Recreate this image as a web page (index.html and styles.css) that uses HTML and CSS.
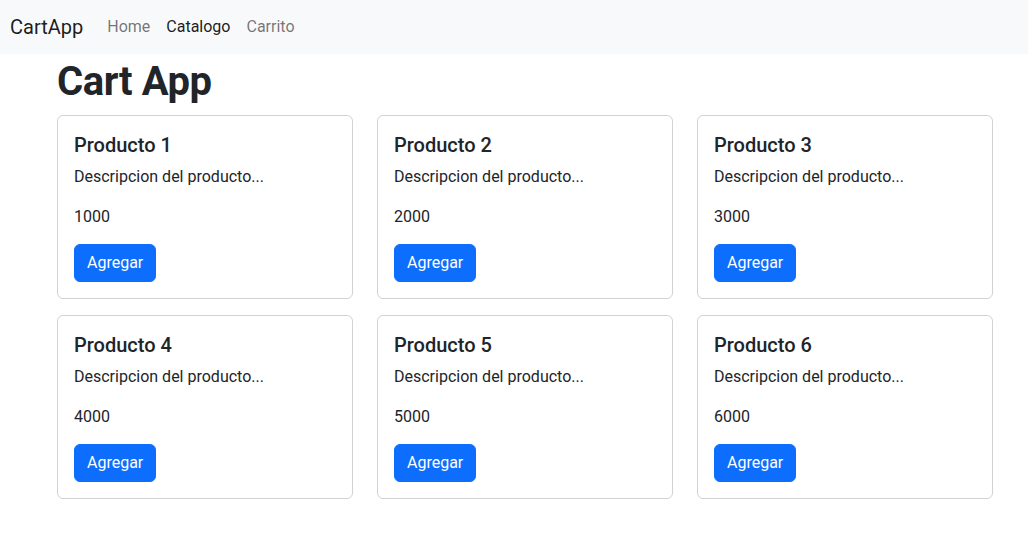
FILE: index.html
```html
<!DOCTYPE html>
<html lang="es">
<head>
<meta charset="utf-8">
<title>CartApp</title>
<link rel="stylesheet" href="styles.css">
</head>
<body>
<nav class="navbar">
  <span class="brand">CartApp</span>
  <ul class="nav">
    <li><a class="nav-link">Home</a></li>
    <li><a class="nav-link active">Catalogo</a></li>
    <li><a class="nav-link">Carrito</a></li>
  </ul>
</nav>
<main class="container">
  <h1 class="title">Cart App</h1>
  <div class="grid">
    <div class="card"><h5 class="card-title">Producto 1</h5><p class="card-text">Descripcion del producto...</p><p class="price">1000</p><button class="btn">Agregar</button></div>
    <div class="card"><h5 class="card-title">Producto 2</h5><p class="card-text">Descripcion del producto...</p><p class="price">2000</p><button class="btn">Agregar</button></div>
    <div class="card"><h5 class="card-title">Producto 3</h5><p class="card-text">Descripcion del producto...</p><p class="price">3000</p><button class="btn">Agregar</button></div>
    <div class="card"><h5 class="card-title">Producto 4</h5><p class="card-text">Descripcion del producto...</p><p class="price">4000</p><button class="btn">Agregar</button></div>
    <div class="card"><h5 class="card-title">Producto 5</h5><p class="card-text">Descripcion del producto...</p><p class="price">5000</p><button class="btn">Agregar</button></div>
    <div class="card"><h5 class="card-title">Producto 6</h5><p class="card-text">Descripcion del producto...</p><p class="price">6000</p><button class="btn">Agregar</button></div>
  </div>
</main>
</body>
</html>
```
FILE: styles.css
```css
* { box-sizing: border-box; }
body {
  margin: 0;
  font-family: Roboto, "Noto Sans", sans-serif;
  font-size: 16px;
  line-height: 1.5;
  color: #212529;
  background: #fff;
}
.navbar {
  display: flex;
  align-items: center;
  height: 54px;
  padding: 0 10px;
  background: #f8f9fa;
}
.brand {
  font-size: 20px;
  color: rgba(0,0,0,.9);
  margin-right: 16px;
}
.nav {
  display: flex;
  list-style: none;
  margin: 0;
  padding: 0;
}
.nav-link {
  display: block;
  padding: 8px;
  color: rgba(0,0,0,.55);
}
.nav-link.active { color: rgba(0,0,0,.9); }
.container {
  width: 936px;
  margin-left: 57px;
  padding-top: 4px;
}
.title {
  margin: 0 0 9px;
  font-size: 40px;
  font-weight: 700;
  letter-spacing: -0.4px;
  line-height: 1.2;
}
.grid {
  display: grid;
  grid-template-columns: repeat(3, 296px);
  column-gap: 24px;
  row-gap: 16px;
}
.card {
  border: 1px solid rgba(0,0,0,.175);
  border-radius: 6px;
  padding: 17px 16px 16px;
}
.card-title {
  margin: 0 0 8px;
  font-size: 20px;
  font-weight: 500;
  line-height: 1.2;
}
.card-text { margin: 0 0 16px; }
.price { margin: 0 0 15px; }
.btn {
  display: block;
  font: inherit;
  line-height: 1.5;
  color: #fff;
  background: #0d6efd;
  border: 1px solid #0d6efd;
  border-radius: 6px;
  padding: 6px 12px;
}
```
